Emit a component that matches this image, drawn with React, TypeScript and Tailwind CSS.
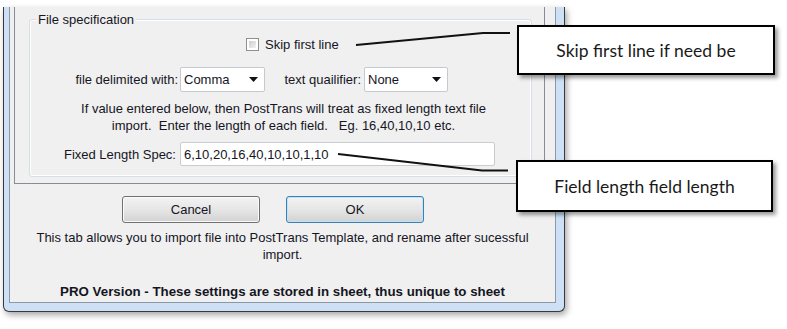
import React from "react";

function Checkbox() {
  return (
    <div className="h-[13px] w-[13px] border border-[#8e8f8f] bg-white p-[2px]">
      <div className="h-full w-full bg-gradient-to-br from-[#c9ccd1] to-[#f4f4f4]" />
    </div>
  );
}

function Combo({ value, width }: { value: string; width: string }) {
  return (
    <div
      className={`flex h-[25px] ${width} items-center justify-between rounded-[2px] border border-[#c6c9ce] bg-white pl-[3px] pr-[6px]`}
    >
      <span>{value}</span>
      <svg width="9" height="5" viewBox="0 0 9 5">
        <path d="M0 0 L9 0 L4.5 5 Z" fill="#111" />
      </svg>
    </div>
  );
}

function Button({ label, primary }: { label: string; primary?: boolean }) {
  return (
    <div
      className={`flex h-[27px] w-[138px] items-center justify-center rounded-[3px] border ${
        primary
          ? "border-[#3c7fb1] shadow-[inset_0_0_0_1px_#bfe3fa]"
          : "border-[#707070] shadow-[inset_0_0_0_1px_#fbfbfb]"
      } bg-gradient-to-b from-[#f3f3f3] via-[#e6e6e6] to-[#d2d2d2]`}
    >
      {label}
    </div>
  );
}

function Callout({ text, className }: { text: string; className: string }) {
  return (
    <div
      className={`absolute flex items-center justify-center border-2 border-black bg-white font-['Lato',sans-serif] text-[17.5px] text-[#1a1a1a] shadow-[3px_3px_4px_rgba(0,0,0,0.4)] ${className}`}
    >
      {text}
    </div>
  );
}

export default function App() {
  return (
    <div className="relative h-[329px] w-[787px] overflow-hidden bg-white font-['Liberation_Sans',Arial,sans-serif] text-[13px] leading-[17px] text-[#15151f]">
      <div className="pl-[3px] pt-[7px]">
        {/* window frame */}
        <div className="flex h-[305px] w-[562px] flex-col rounded-b-[6px] border-x border-b border-[#3a3a3a] bg-[#cde0f5] pb-[8px] pl-[5px] pr-[8px] shadow-[2px_3px_6px_rgba(0,0,0,0.35)]">
          <div className="flex flex-1 flex-col border-x border-b border-[#8d98a6] bg-[#f0f0f0]">
            {/* tab page */}
            <div className="ml-[4px] h-[177px] w-[531px] border-x border-b border-[#898c95] pl-[14px] pt-[12px]">
              <div className="relative h-[158px] w-[503px] rounded-[3px] border border-[#d5dfe5] shadow-[inset_0_0_0_1px_#ffffff]">
                <span className="absolute left-[6px] top-[-9px] bg-[#f0f0f0] px-[2px]">File specification</span>

                <div className="ml-[216px] mt-[18px] flex h-[13px] items-center gap-[6px]">
                  <Checkbox />
                  <span>Skip first line</span>
                </div>

                <div className="mt-[16px] flex items-center">
                  <span className="w-[148px] text-right">file delimited with:</span>
                  <div className="ml-[2px]">
                    <Combo value="Comma" width="w-[85px]" />
                  </div>
                  <span className="w-[99px] pr-[3px] text-right">text quailifier:</span>
                  <Combo value="None" width="w-[84px]" />
                </div>

                <div className="mt-[8px] pl-[6px] text-center">
                  <div>If value entered below, then PostTrans will treat as fixed length text file</div>
                  <div className="whitespace-pre">import.  Enter the length of each field.   Eg. 16,40,10,10 etc.</div>
                </div>

                <div className="mt-[8px] flex items-center">
                  <span className="w-[146px] text-right">Fixed Length Spec:</span>
                  <div className="ml-[4px] flex h-[24px] w-[315px] items-center rounded-[2px] border border-[#c9cdd3] bg-white pl-[3px]">
                    6,10,20,16,40,10,10,1,10
                  </div>
                </div>
              </div>
            </div>

            <div className="ml-[112px] mt-[12px] flex gap-[26px]">
              <Button label="Cancel" />
              <Button label="OK" primary />
            </div>

            <div className="mt-[6px] text-center">
              <div>This tab allows you to import file into PostTrans Template, and rename after sucessful</div>
              <div>import.</div>
            </div>

            <div className="mt-[20px] text-center text-[13.3px] font-bold">
              PRO Version - These settings are stored in sheet, thus unique to sheet
            </div>
          </div>
        </div>
      </div>

      <svg className="pointer-events-none absolute inset-0" width="787" height="329">
        <polyline points="356,45 483,33 510,33" fill="none" stroke="#111" strokeWidth="2" />
        <polyline points="338,154 482,170.5 508,170.5" fill="none" stroke="#111" strokeWidth="2" />
      </svg>

      <Callout text="Skip first line if need be" className="left-[517px] top-[25px] h-[50px] w-[258px]" />
      <Callout text="Field length field length" className="left-[516px] top-[160px] h-[52px] w-[257px]" />
    </div>
  );
}
